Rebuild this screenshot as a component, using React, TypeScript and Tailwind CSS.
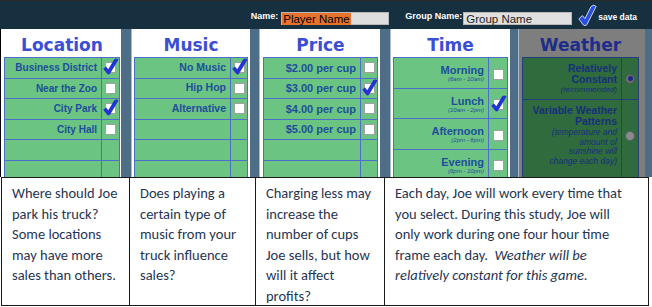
import React from "react";

const LBL = "font-['Liberation_Sans',Arial,sans-serif]";

function Check({ left = -3, top = -5 }: { left?: number; top?: number }) {
  return (
    <svg
      width="16"
      height="17"
      viewBox="0 0 16 17"
      className="absolute"
      style={{ left, top }}
    >
      <path
        d="M0.2 10.8 L3 8.4 L5.3 11.2 L11.2 1.2 Q13.6 -0.6 15.6 1.6 L7 15.8 Q5.4 17.2 4 15.6 Z"
        fill="#2235d2"
      />
    </svg>
  );
}

function Box({ checked }: { checked?: boolean }) {
  return (
    <div className="relative w-[11px] h-[11px] bg-white border border-[#a0a0a0]">
      {checked && <Check />}
    </div>
  );
}

function SimpleRow({
  label,
  checked,
  box,
  size,
  colW,
}: {
  label?: string;
  checked?: boolean;
  box?: boolean;
  size: string;
  colW: string;
}) {
  return (
    <div className="flex h-[20.5px] shrink-0 border-b border-[#4c6fca]">
      <div
        className={`flex-1 flex items-center justify-end pr-[4px] font-bold text-[#1d4e9c] whitespace-nowrap ${LBL} ${size}`}
      >
        {label}
      </div>
      <div className={`${colW} border-l border-[#4c6fca] flex items-center justify-center`}>
        {box && <Box checked={checked} />}
      </div>
    </div>
  );
}

function Header({ children }: { children: React.ReactNode }) {
  return (
    <div className="h-[28px] shrink-0 flex items-center justify-center pt-[5px] text-[17px] font-bold text-[#3a4fd3] font-['DejaVu_Sans',sans-serif]">
      {children}
    </div>
  );
}

function SimpleColumn({
  title,
  rows,
  width,
  ml,
  pad,
  size,
  colW,
}: {
  title: string;
  rows: { label: string; checked?: boolean }[];
  width: string;
  ml: string;
  pad: string;
  size: string;
  colW: string;
}) {
  const all = [...rows];
  while (all.length < 6) all.push({ label: "" });
  return (
    <div className={`${width} ${ml} bg-white flex flex-col ${pad}`}>
      <Header>{title}</Header>
      <div className="flex-1 bg-[#6bc482] border-l border-r border-t border-[#4c6fca] flex flex-col overflow-hidden">
        {all.map((r, i) => (
          <SimpleRow
            key={i}
            label={r.label}
            checked={r.checked}
            box={i < rows.length}
            size={size}
            colW={colW}
          />
        ))}
      </div>
    </div>
  );
}

function TimeRow({ label, sub, checked }: { label: string; sub: string; checked?: boolean }) {
  return (
    <div className="flex h-[30.5px] shrink-0 border-b border-[#4c6fca]">
      <div className={`flex-1 flex flex-col items-end justify-center pr-[4px] text-[#1d4e9c] ${LBL}`}>
        <div className="text-[11px] font-bold leading-[12px] pt-[2px]">{label}</div>
        <div className="text-[6px] italic leading-[7px]">{sub}</div>
      </div>
      <div className="w-[19px] border-l border-[#4c6fca] flex items-center justify-center pt-[3px]">
        <Box checked={checked} />
      </div>
    </div>
  );
}

function Radio({ on }: { on?: boolean }) {
  return on ? (
    <div className="w-[10px] h-[10px] rounded-full bg-[#6f6f6f] border border-[#555] flex items-center justify-center">
      <div className="w-[5px] h-[5px] rounded-full bg-[#1a2a86]" />
    </div>
  ) : (
    <div className="w-[10px] h-[10px] rounded-full bg-[#8a8a8a] border border-[#5f5f5f]" />
  );
}

export default function App() {
  return (
    <div className="w-[652px] h-[307px] overflow-hidden bg-white relative">
      {/* top bar */}
      <div className={`h-[29px] bg-[#16303f] border-t border-[#2b2b2b] flex items-end justify-end pr-[15px] pb-[4px] ${LBL}`}>
        <span className="text-white font-bold text-[9px] mb-[2px]">Name:</span>
        <div className="ml-[3px] w-[108px] h-[13px] bg-[#dedede] border border-[#b8b8b8] flex items-center">
          <span className="bg-[#e8732a] text-black text-[11.5px] leading-[12px] pl-[1px] pr-[1px]">Player Name</span>
        </div>
        <span className="ml-[16px] text-white font-bold text-[9px] mb-[2px]">Group Name:</span>
        <div className="ml-[1px] w-[109px] h-[13px] bg-[#e0e0e0] border border-[#b8b8b8] flex items-center pl-[2px]">
          <span className="text-[#222] text-[11.5px] leading-[12px]">Group Name</span>
        </div>
        <svg width="20" height="23" viewBox="0 0 20 23" className="ml-[5px] mb-[-2px]">
          <path
            d="M1.8 14.8 L5.4 11.6 L8 14.6 L14 2.6 Q16.8 -0.2 19.2 2.4 L9.8 20.8 Q7.8 22.6 6.2 20.8 Z"
            fill="#2a4fe0"
            stroke="#c8d4ee"
            strokeWidth="1"
          />
        </svg>
        <span className="ml-[1px] text-white font-bold text-[8.5px] mb-[1px]">save data</span>
      </div>

      {/* columns */}
      <div className="h-[148px] flex bg-[#4e6d87] border-l border-black">
        <SimpleColumn
          title="Location"
          width="w-[120px]"
          ml="ml-0"
          pad="pl-[3px] pr-[1px]"
          size="text-[10px]"
          colW="w-[18px]"
          rows={[
            { label: "Business District", checked: true },
            { label: "Near the Zoo" },
            { label: "City Park", checked: true },
            { label: "City Hall" },
          ]}
        />
        <SimpleColumn
          title="Music"
          width="w-[119px]"
          ml="ml-[10px] border-l border-[#a9bace]"
          pad="pl-[2px] pr-[2px]"
          size="text-[10.5px]"
          colW="w-[17px]"
          rows={[
            { label: "No Music", checked: true },
            { label: "Hip Hop" },
            { label: "Alternative" },
          ]}
        />
        <SimpleColumn
          title="Price"
          width="w-[121px]"
          ml="ml-[9px] border-l border-[#a9bace]"
          pad="pl-[3px] pr-[2px]"
          size="text-[11px]"
          colW="w-[17px]"
          rows={[
            { label: "$2.00 per cup" },
            { label: "$3.00 per cup", checked: true },
            { label: "$4.00 per cup" },
            { label: "$5.00 per cup" },
          ]}
        />
        {/* Time */}
        <div className="w-[120px] ml-[10px] border-l border-[#a9bace] bg-white flex flex-col px-[2px]">
          <Header>Time</Header>
          <div className="flex-1 bg-[#6bc482] border-l border-r border-t border-[#4c6fca] flex flex-col overflow-hidden">
            <TimeRow label="Morning" sub="(6am - 10am)" />
            <TimeRow label="Lunch" sub="(10am - 2pm)" checked />
            <TimeRow label="Afternoon" sub="(2pm - 6pm)" />
            <TimeRow label="Evening" sub="(6pm - 10pm)" />
          </div>
        </div>
        {/* Weather */}
        <div className="w-[127px] ml-[8px] border-l border-[#a9bace] bg-[#7e7e7e] flex flex-col pl-[3px] pr-[6px]">
          <div className="h-[28px] shrink-0 flex items-center justify-center pt-[5px] text-[17px] font-bold text-[#1f2d8a] font-['DejaVu_Sans',sans-serif]">
            Weather
          </div>
          <div className={`flex-1 bg-[#2f6b3d] border-l border-r border-t border-[#23407e] flex flex-col overflow-hidden text-[#17307a] ${LBL}`}>
            <div className="flex h-[42px] shrink-0 border-b border-[#23407e]">
              <div className="flex-1 flex flex-col items-end justify-center pr-[4px] pt-[1px] text-right">
                <div className="text-[10.5px] font-bold leading-[11px]">Relatively</div>
                <div className="text-[10.5px] font-bold leading-[11px]">Constant</div>
                <div className="text-[8px] italic leading-[10px]">(recommended)</div>
              </div>
              <div className="w-[17px] border-l border-[#23407e] flex items-center justify-center">
                <Radio on />
              </div>
            </div>
            <div className="flex flex-1">
              <div className="flex-1 flex flex-col items-end pr-[4px] pt-[5px] text-right">
                <div className="text-[10.5px] font-bold leading-[11px]">Variable Weather</div>
                <div className="text-[10.5px] font-bold leading-[11px]">Patterns</div>
                <div className="text-[8.5px] italic leading-[9.5px] mt-[1px]">(temperature and</div>
                <div className="text-[8.5px] italic leading-[9.5px]">amount of</div>
                <div className="text-[8.5px] italic leading-[9.5px]">sunshine will</div>
                <div className="text-[8.5px] italic leading-[9.5px]">change each day)</div>
              </div>
              <div className="w-[17px] border-l border-[#23407e] flex justify-center pt-[31px]">
                <Radio />
              </div>
            </div>
          </div>
        </div>
      </div>

      {/* bottom table */}
      <div
        className="ml-[1px] w-[648px] h-[129px] grid grid-cols-[128px_126px_129px_265px] border-t border-b border-[#1a1a1a] text-[14.5px] leading-[20.5px] text-[#1f3553] font-['Carlito','Lato',sans-serif]"
      >
        <div className="border-l border-[#1a1a1a] pl-[10px] pt-[5px] whitespace-nowrap overflow-hidden">
          Where should Joe<br />park his truck?<br />Some locations<br />may have more<br />sales than others.
        </div>
        <div className="border-l border-[#1a1a1a] pl-[10px] pt-[5px] whitespace-nowrap overflow-hidden">
          Does playing a<br />certain type of<br />music from your<br />truck influence<br />sales?
        </div>
        <div className="border-l border-[#1a1a1a] pl-[10px] pt-[5px] whitespace-nowrap overflow-hidden">
          Charging less may<br />increase the<br />number of cups<br />Joe sells, but how<br />will it affect<br />profits?
        </div>
        <div className="border-l border-r border-[#1a1a1a] pl-[10px] pt-[5px] whitespace-nowrap overflow-hidden">
          Each day, Joe will work every time that<br />you select. During this study, Joe will<br />only work during one four hour time<br />frame each day.&nbsp;&nbsp;<i>Weather will be</i>
          <br />
          <i>relatively constant for this game.</i>
        </div>
      </div>
    </div>
  );
}
